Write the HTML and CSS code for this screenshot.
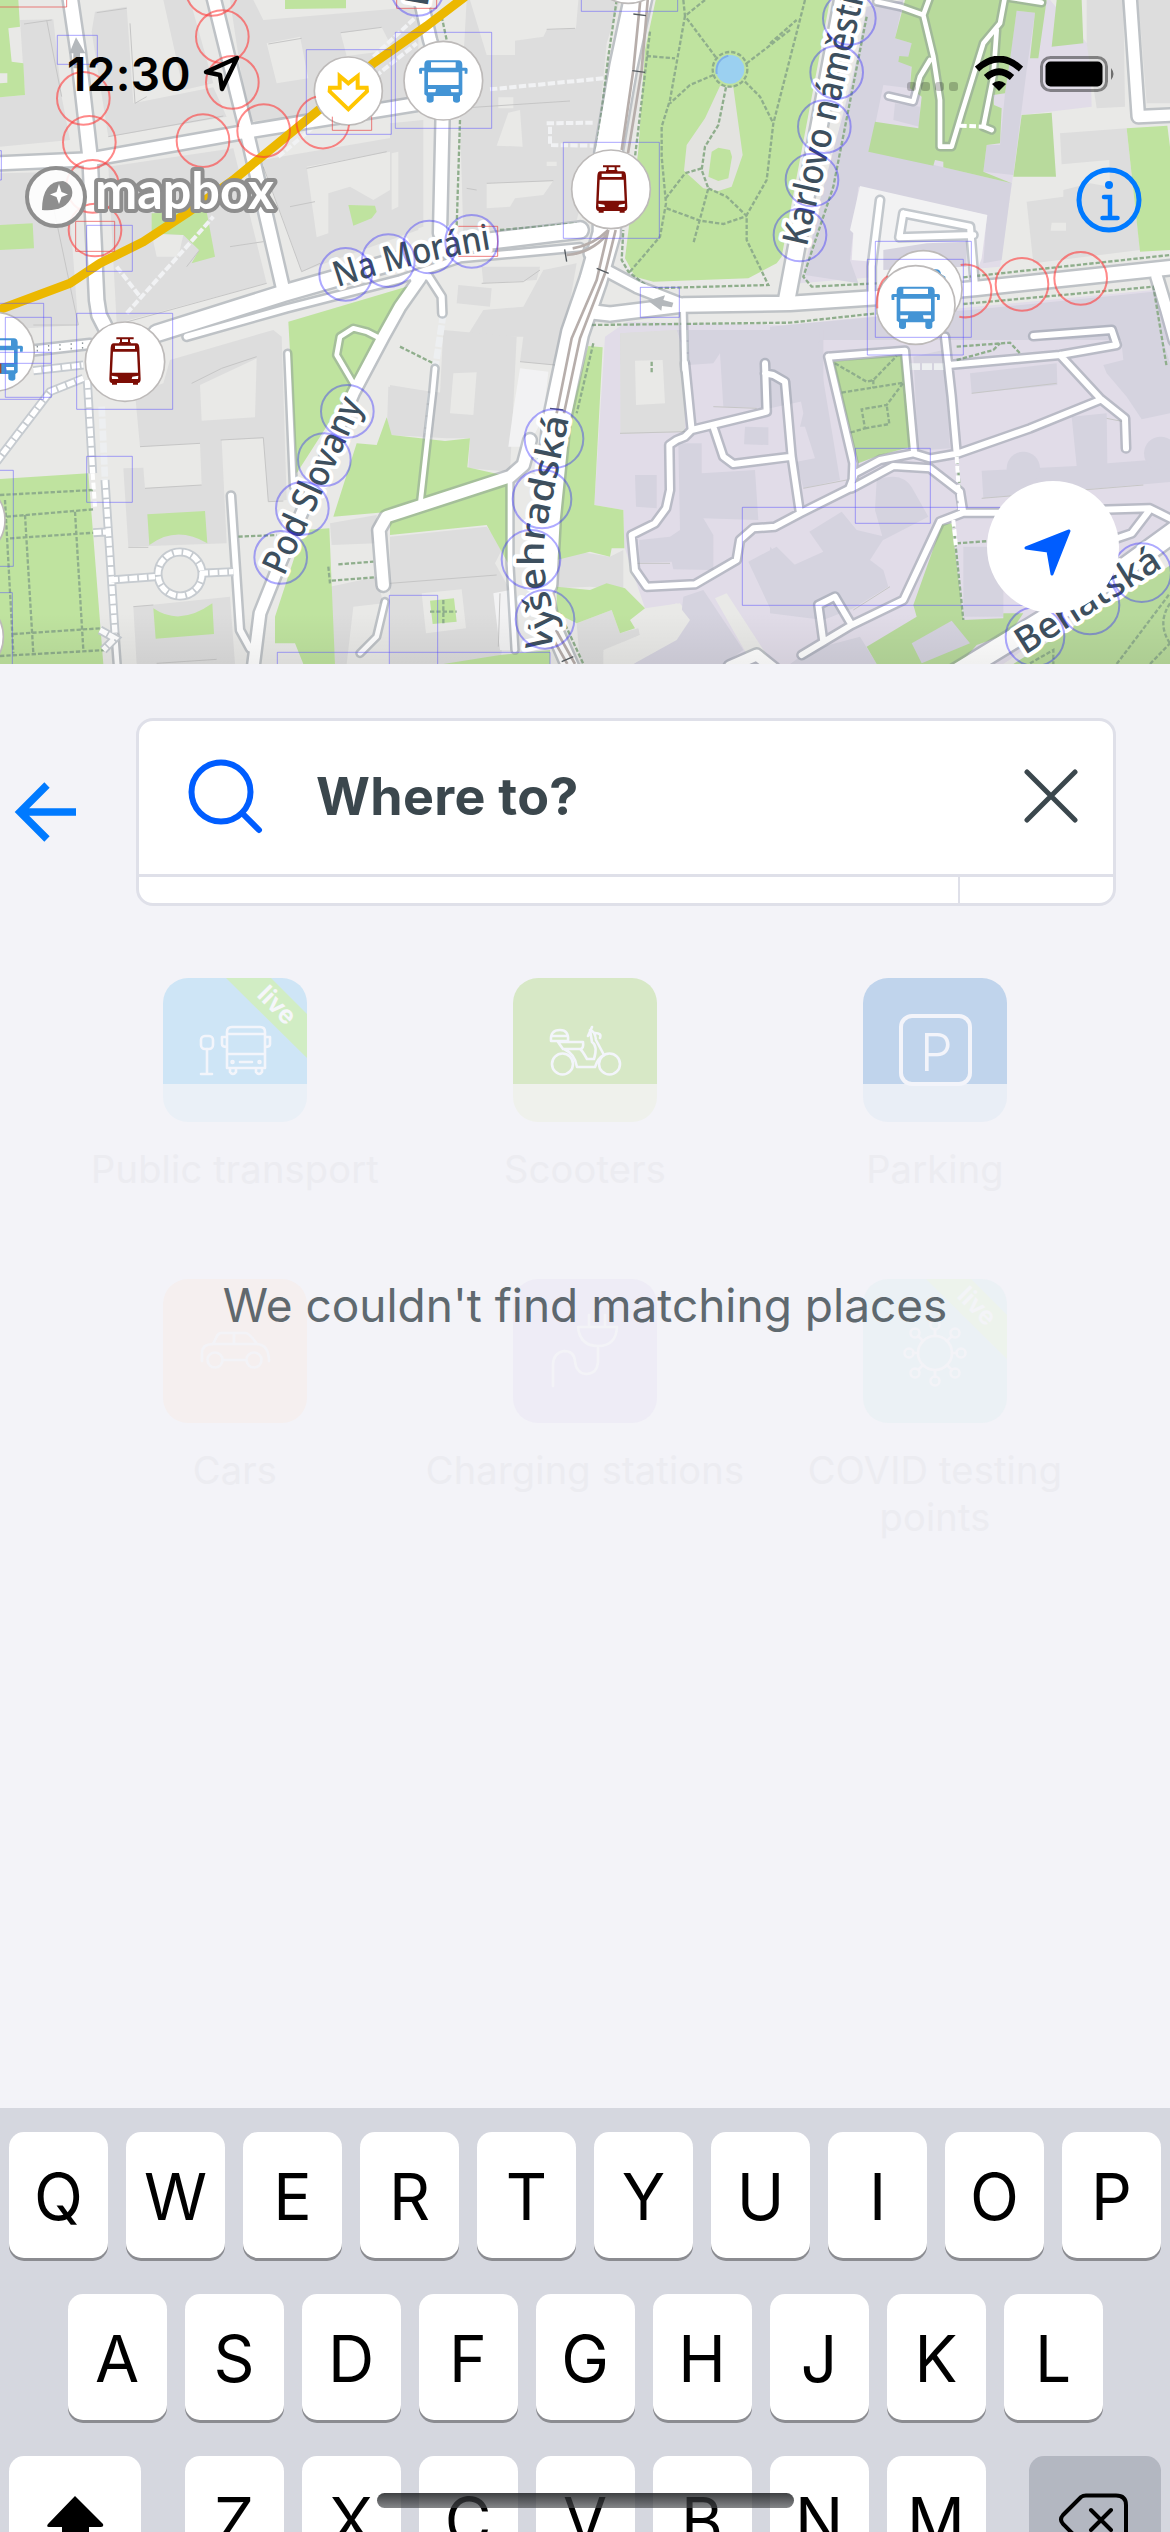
FILE: index.html
```html
<!DOCTYPE html>
<html lang="en">
<head>
<meta charset="utf-8">
<title>Where to?</title>
<link rel="stylesheet" href="styles.css">
</head>
<body>
<main class="screen">
<section class="map">
<svg class="map-canvas" viewBox="0 0 3510 1992" width="1170" height="664">
<defs>
<g id="roads">
  <g>
    <path class="r42" d="M210 -10L235 160L270 470L290 900L297 945L325 1000"/>
    <path class="r36" d="M-10 490L270 478L740 395L1250 312"/>
    <path class="r36" d="M640 -10L740 395L850 870"/>
    <path class="r50" d="M470 1000L850 880L1200 780L1370 735L1740 690"/>
    <path class="r20" d="M560 1010L860 925L1200 838L1380 775L1740 742"/>
  </g>
  <g transform="translate(1170 0)">
    <path class="r36" d="M90 -10L120 120L160 250L150 700"/>
    <path class="r50" d="M1360 -10L1190 900"/>
    <path class="r40" d="M600 935L660 942L880 915L1200 910L1460 893L1760 865L2040 835L2350 802"/>
    <path class="r30" d="M880 915L740 860L650 812L600 760"/>
    <path class="r16" d="M880 930L884 1110"/>
    <path class="r20" d="M70 835L115 828L155 890L157 940"/>
    <path class="r30" d="M90 835L30 920L-20 1010L-110 1180L-330 1690L-390 1840L-410 2000"/>
    <path class="r84" d="M745 -10L700 200L655 460L650 700L610 840L555 1000L500 1260L470 1560L460 1750"/>
    <path class="r50" d="M450 1720L480 1860L545 2010"/>
  </g>
  <g transform="translate(2310 0)">
    <path class="r34" d="M1080 -10L1105 350L1210 345"/>
    <path class="r30" d="M1160 830L1190 930L1215 1020"/>
    <path class="r16" d="M320 5L390 20L460 45L490 170L510 300L510 440L545 440L575 340L640 130L690 70L705 -10M480 -10L460 45M480 180L450 230L430 305L355 288M680 90L670 230L640 380L665 390M700 -10L815 8"/>
    <path class="r20" d="M330 600L305 800L305 880M400 640L388 712L610 705M400 640L600 680L615 860"/>
  </g>
  <g transform="translate(0 990)">
    <path class="r16" d="M345 915L352 1010M863 70L880 470M1155 815L1130 920L1080 970"/>
    <path class="r20" d="M693 497L720 900L750 955"/>
    <path class="r16" d="M1060 160L1010 75L1020 20L1060 -5L1100 5L1140 25"/>
    <path class="r34" d="M1150 765L1137 600L1160 560L1200 547L1530 440L1570 405L1590 330"/>
    <path class="r22" d="M90 62L270 42"/>
  </g>
  <g transform="translate(1170 990)">
    <path class="r16" d="M135 115L128 190L112 330L92 510M360 450L360 700L375 960"/>
    <path class="r20" d="M885 100L905 300M1125 100L1130 245L905 300L885 320L860 330L838 345L840 480L828 535L795 580L725 615L735 720L770 770L915 763L1040 690L1050 630L1090 595L1155 590L1230 550L1380 475M970 290L1000 380L1030 402L1205 380M1125 130L1150 135L1185 155L1205 380L1230 550"/>
    <path class="r30" d="M1020 1010L1100 975L1150 1015"/>
  </g>
  <g transform="translate(2310 990)">
    <path class="r20" d="M790 18L1025 0L1040 45L870 75L535 105M870 75L990 205L1065 265L1068 355M525 20L545 200L560 370M990 210L780 295L565 370L480 385L430 370L330 390L255 430L238 475M245 475L370 408L480 415L570 485L580 548M580 548L690 548L1140 535L1210 570M1135 545L1085 610L1035 627M580 548L510 575L400 810L245 885L95 975M245 885L195 800L145 825L160 935M175 80L405 62L432 365M175 80L250 400L248 450"/>
    <path class="r60" d="M560 1030L740 920L1000 760L1220 600"/>
  </g>
</g>
<g id="stairs">
  <path d="M-10 1385L150 1175L250 1135M262 1140L278 1420M315 1440L345 1900M100 1112L250 1095M330 1740L465 1730M600 1720L700 1715M280 1598L330 1595M300 1890L345 1915L310 1950"/>
  <circle cx="540" cy="1722" r="66"/>
</g>
<g id="bus">
  <path fill="#4394d5" fill-rule="evenodd" d="M-46 -60Q-56 -60 -57 -48L-57 -38L-68 -38Q-73 -38 -73 -32L-72 -20L-64 -20L-64 -29L-57 -29L-57 42L-50 47L-50 62Q-48 67 -41 67Q-29 67 -29 60L-29 47L29 47L29 60Q29 67 41 67Q48 67 50 62L50 47L57 42L57 -29L64 -29L64 -20L72 -20L73 -32Q73 -38 68 -38L57 -38L57 -48Q56 -60 46 -60ZM-37 -54L37 -54L37 -38L-37 -38ZM-46 -24L46 -24L46 14L-46 14ZM-46 26L-22 26L-24 36L-46 36ZM46 26L22 26L24 36L46 36Z"/>
</g>
<g id="tram">
  <path fill="none" stroke="#7d0d05" stroke-width="6" d="M-26 -68H26M-12 -67V-54M12 -67V-54M-17 -54H17"/>
  <path fill="#7d0d05" fill-rule="evenodd" d="M-34 -53H34Q42 -53 43 -40L47 55Q47 66 39 66V71H24V66H-24V71H-39V66Q-47 66 -47 55L-43 -40Q-42 -53 -34 -53ZM-30 -46V-36H30V-46ZM-36 -28L-39 35H39L36 -28ZM-40 44L-39 54H-20L-22 47ZM40 44L39 54H20L22 47Z"/>
</g>
<path id="ln-morani" d="M1013 862Q1235 787 1478 747"/>
<path id="ln-slovany" d="M852 1730L1092 1206"/>
<path id="ln-vysehrad" d="M1650 1955Q1672 1860 1648 1790Q1622 1690 1636 1600L1710 1238"/>
<path id="ln-karlovo" d="M2420 742L2602 -56"/>
<path id="ln-benat" d="M3074 1966L3504 1692"/>
<linearGradient id="fade" x1="0" y1="0" x2="0" y2="1"><stop offset="0" stop-color="#000" stop-opacity="0"/><stop offset="1" stop-color="#000" stop-opacity=".06"/></linearGradient>
</defs>

<rect width="3510" height="1992" fill="#e9e9e7"/>

<g class="campus">
  <path d="M2600 60L2700 20L3150 0L3270 140L3275 320L3065 345L3000 800L2400 850Z"/>
  <path d="M1815 1010L1880 965L2350 975L3460 870L3510 1000V1640L3010 1992H2170L2040 1810L1935 1825L1873 1640L1870 1530L1783 1515Z"/>
</g>

<g class="block">
  <path d="M60 60L160 58L185 290L210 420L0 440V292L75 285ZM275 95L285 35L380 20L400 310L640 262L680 350L325 410ZM490 0H570L640 250L550 270ZM690 0H760L790 60L1255 20V310L745 365ZM0 520L200 515L235 975L0 990ZM325 500L700 445L800 850L350 970ZM785 480L1255 400V690L905 815Z"/>
  <path transform="translate(1170 0)" d="M230 0H690L650 130L620 450L560 660L220 700L210 360ZM0 370L100 360V680L0 710ZM205 855L305 865L300 920L200 910ZM275 800L450 800L440 840L280 850ZM460 810L560 790L520 1020L490 1095L390 1085L400 1010H230L280 930L400 920Z"/>
  <path transform="translate(2310 0)" d="M950 0H1060L1065 320L980 325L950 130ZM1105 0H1200V310L1130 310ZM870 400L1070 385L1110 750L790 790L770 605L880 590V570L960 550L1020 560L1018 480L875 493Z"/>
  <path transform="translate(0 990)" d="M510 90L820 0L845 20L860 510L805 515L790 325L665 330L680 640L385 650L370 415L430 413L435 475L605 465L600 340L420 350L405 190L490 160ZM400 830L690 800L705 1002H410ZM990 580L1130 555V640L995 645ZM990 770L1130 740L1150 820L1060 830L1040 1002H1005ZM1165 170L1250 180L1340 190V320L1160 315Z"/>
  <path transform="translate(1170 990)" d="M160 0L380 20L360 425L235 415L240 325L170 325L0 315V165L150 190ZM690 10L860 0L885 100V305L692 312ZM0 620L290 590L340 650L315 700L360 780L330 1002H0ZM500 690L570 665L660 680L700 660V780L600 770L500 775ZM560 880L665 840L690 910L745 895L750 915L640 960L650 1002H570Z"/>
</g>
<g class="hall">
  <path transform="translate(2310 0)" d="M290 20L400 0L375 115L425 130L420 265L340 255L300 450L725 550L695 780L640 790L650 645L265 560L240 780L265 850L105 825L150 600L250 230ZM740 32L795 38L770 210L730 525L640 515L650 435L690 435L705 280ZM375 310L450 320L448 380L370 360ZM340 750L600 725V800L340 810ZM0 980L320 950L600 930L1150 875L1190 1020H0Z"/>
  <path transform="translate(1170 990)" d="M690 0H1300V200L1140 235L1000 230L990 70L970 100L895 105L860 0ZM865 340H935V430L1095 420L1105 570L940 565L970 615V720L850 718L845 695L748 698V630L840 620L870 600ZM735 435H800V535L738 530ZM1065 290L1135 292V345L1062 343ZM1075 695L1160 650L1230 720L1240 800L1145 845ZM880 800L940 780L1060 960L1000 1002H730L870 890Z"/>
  <path transform="translate(2310 990)" d="M0 0H150L145 60L210 450L100 475L80 395L135 385L105 290H90L100 250L65 75H0ZM430 80L520 60L540 355L445 362ZM600 130L860 100L862 165L605 190ZM905 260L1010 250L1012 400L1210 385V455L640 505L635 422L920 408ZM1000 105L1060 90L1050 0H1170L1200 100V250L1115 268L1070 200L1010 130ZM320 450Q400 420 430 480L475 560L340 630L315 540ZM118 605L215 545L260 600L345 620L300 690L340 720L355 770L250 835L160 870L0 850V650L60 710L160 665ZM580 650H700V860H580ZM120 960L270 920L320 1002H60Z"/>
  <circle cx="3070" cy="1405" r="50"/><circle cx="3482" cy="1360" r="50"/>
</g>
<path class="block" d="M1862 1000L2030 990L2055 1090V1295L1862 1302Z"/>
<g class="yard">
  <path d="M800 130L900 110L925 235L830 250ZM1022 100L1145 82L1180 150L1040 168ZM455 702L550 705L535 770H470ZM920 500L1170 455V570L1120 600L1050 560L985 580V700L950 712Z"/>
  <path transform="translate(1170 0)" d="M240 0H565L558 85L470 90L460 110L375 122V165L290 165ZM325 292H370V325H325ZM355 338L390 330L398 440L320 437ZM290 550L490 542L460 585L375 595L360 620L290 625ZM5 460L25 455V620L5 630ZM470 485H500V498H470Z"/>
  <path transform="translate(0 990)" d="M600 165L770 85L765 262L605 272Z"/>
  <path transform="translate(1170 990)" d="M190 130L260 127L250 255L180 250ZM735 92L818 90L825 220L738 225ZM95 790L215 778L228 895L108 910ZM975 805L1010 790L1140 990H1080ZM740 860L860 820L900 870L860 930L730 1002H640L640 965L750 915Z"/>
  <path d="M3155 668H3198V692H3152Z"/>
</g>
<g class="lot">
  <path d="M2580 558L2962 645L2945 775L2910 870H2610L2620 785L2555 780L2560 700L2550 690Z"/>
  <path d="M1560 1105L1645 1115L1630 1250L1600 1310L1565 1340H1525L1540 1230ZM1480 1780L1530 1770V1950H1500Z"/>
</g>
<path class="hall" d="M2650 750L2780 730L2900 725V800L2650 810Z"/>

<g class="park">
  <path d="M0 0H55L60 80L25 85L35 185L70 190L75 285L0 292V250L22 248V220H0ZM0 675L98 670L102 745L0 750ZM455 640L620 635L645 770L575 790L597 750L550 705L455 700ZM855 0H1038V25L855 27ZM1045 615L1125 617L1130 635L1115 655L1060 677ZM865 965L1270 845L1050 1170L890 1420Z"/>
  <path d="M1967 0H2490L2345 770L2330 790L2245 835L1960 845L1905 830L1875 775L1915 450L1935 150Z"/>
  <path transform="translate(2310 0)" d="M1070 385L1192 377L1200 440V750L1110 755Z"/>
  <path d="M0 1437L265 1420L310 1992H0ZM442 1543L615 1533L622 1630Q530 1575 448 1635ZM460 1825Q540 1880 637 1810L642 1902L467 1916ZM1160 1252L1175 1305L1335 1323L1410 1315L1402 1402L1530 1430V1700L1460 1575L1170 1605V1535L1000 1550L1070 1330L1130 1335ZM910 1590L988 1585L1005 1992H910L885 1930H825V1850Z"/>
  <path transform="translate(1170 990)" d="M595 48L638 52L613 525L700 540L703 655L665 655L660 680L600 665L500 690L480 640L540 260ZM500 770L600 780L650 760L705 775L765 835L720 870L735 895L690 910L665 840L560 880L500 850ZM120 812L192 805L200 875L128 882ZM160 1002L330 975L480 960V1002Z"/>
</g>
<g class="lawn">
  <path transform="translate(2310 0)" d="M405 0H830L805 175L780 175L795 38L740 32L720 180L705 280L670 285L672 315L695 325L690 430L650 435L640 515L725 550L520 502L520 485L495 480L490 497L295 455L315 365L445 385L455 290L420 265L425 200L385 185L388 168L415 170L425 130L375 115ZM860 0H935L940 130L845 140ZM755 345L845 338L858 530H730Z"/>
  <path transform="translate(2310 990)" d="M190 95L395 75L425 350L330 375L265 400ZM515 585L545 580L580 870L700 865V850L760 850L720 910L620 945L570 1002H320L290 950L440 860L430 825ZM730 1002L1210 700V1002Z"/>
</g>
<path class="hall" d="M2735 1930L2855 1862L2910 1930L2765 1990Z"/>
<path fill="#e3e3e0" d="M2160 258L2200 262L2228 465L2195 560L2155 573L2110 565L2052 512L2060 435L2115 355Z"/>
<path class="park" d="M2135 455L2155 443L2190 450L2196 470L2185 535L2155 543L2125 530Z"/>

<g class="edge">
  <path d="M72 72L155 60M290 38L380 25M390 70L405 310L440 290M325 410L670 348M805 132L905 115M1022 98L1145 82M365 970L800 850M790 500L905 815L960 790M920 505L1160 455M690 740L790 725M870 620L945 605M560 800L597 752M160 620L235 975L100 975M140 60L185 290"/>
  <path transform="translate(1170 0)" d="M470 88L555 85M290 550L490 542M205 325L540 303M230 565L260 570M275 850L400 845L450 810"/>
  <path d="M575 1150L665 1105L770 1070M420 1340L600 1330M435 1465L605 1455M662 1320L790 1313L805 1505L850 1503M385 1642L445 1642M400 1820L460 1815M470 1990L650 1978M1560 1085L1665 1095M1860 1300L2055 1295M1170 1750L1490 1725M1500 1780L1495 1940"/>
  <path d="M2945 1495L3430 1455M2915 1180L3170 1150M3320 1255L3370 1265M2560 1830L2670 1760M2140 1220L2270 1225M1910 1690H2010M2410 1465L2540 1440"/>
</g>

<g class="track-path">
  <path transform="translate(1170 0)" d="M880 0L885 48L980 175M945 0L885 48L840 300L815 380V470L828 610L810 710L720 815M1200 90L1070 190M970 225L900 255L840 310M1065 245L1110 290L1150 370M1245 0L1150 370L1130 540L1070 645V720L1135 855L780 865L715 815L695 780L700 690M1008 262L985 375L945 440L935 510L955 565L910 730M935 505L885 520L825 598M955 565L1010 590L1070 648M830 625L930 662L1000 672L1070 648M780 95L735 470M770 168L855 175M605 975L1200 968L1460 940M680 0L655 170L620 450M330 690L560 670M210 360L200 680M155 50L170 120M1140 130L1220 60M1430 50L1330 560L1240 830L1265 860L1460 850M1720 832L2340 765M1720 912L2290 860L2330 1100"/>
  <circle cx="2190" cy="208" r="52"/>
  <path d="M0 1485L280 1470M20 1550L280 1528M30 1615L330 1595M75 1545L100 1960M225 1535L250 1950M15 1500L40 1960M40 1902L300 1885M0 1968L320 1950M715 1610L830 1605M1015 1693L1120 1685M995 1742L1125 1732M985 1700L990 1750M1200 1040L1300 1090M1955 1085V1120"/>
  <path transform="translate(2310 990)" d="M195 100L290 155L310 150L380 78M215 188L400 158L350 225L275 238L285 295L240 308M285 295L358 282L350 225M310 150V175M560 50L720 38L750 70M560 90L670 60L690 40M550 580L580 870M560 640L700 630M570 1002L720 920M1040 1002L1200 790M1140 1002L1200 940M780 1000L850 960V1002M1200 820Q1160 880 1200 940M560 370L570 480"/>
  <path d="M1780 1030L1730 1240M1680 1840L1750 1992M1290 1835H1370M1330 1800V1870"/>
</g>
<g class="faded-path">
  <path d="M1470 268L1810 235M1640 370L1780 368M1650 380V435L1780 437M835 470L1000 330L1250 130M380 940L560 740L640 650M350 800L420 890M1120 170L1260 40"/>
</g>
<path class="passage" d="M1330 940L1305 1110M2055 990L2056 1085M305 1220L315 1440M2730 1100L2850 1100M1293 1180L1282 1300"/>

<use href="#roads" class="road-case"/>
<use href="#roads" class="road-fill"/>
<use href="#stairs" class="stairs-case"/>
<use href="#stairs" class="stairs-fill"/>
<path fill="none" stroke="#8d9499" stroke-width="5" stroke-dasharray="4 30" d="M110 1040L270 1028M110 1052L270 1042"/>
<path fill="none" stroke="#fff" stroke-width="12" stroke-dasharray="20 8" d="M2870 1370L2880 1530M2860 1560L2868 1640M2880 377L2950 380M278 1420L285 1520"/>

<g class="rail">
  <path transform="translate(1170 0)" d="M752 -10L730 210L695 450M774 -10L755 210L714 460M655 690L620 840L545 1015L500 1240M677 690L645 820L570 1015L522 1240M655 690Q610 735 548 745M650 705Q600 760 530 765"/>
  <path d="M1650 1900L1702 1992M1668 1890L1725 1992"/>
</g>
<path fill="none" stroke="#555b60" stroke-width="4" d="M1900 42L1938 47M1897 212L1935 217M1790 805L1826 820M1694 748L1700 785M1650 1225L1690 1230M1685 1985L1720 1970"/>
<circle cx="2190" cy="208" r="43" fill="#9bd0f0"/>
<path fill="none" stroke="#7fb0e6" stroke-width="6" d="M2150 222Q2145 180 2185 167"/>
<g fill="#b4b8bc">
  <path d="M228 112L208 160H220V205H240V160H256Z"/>
  <path d="M1944 902L1995 886L1990 900L2020 908L2016 922L1986 918L1984 932Z"/>
</g>
<path fill="none" stroke="#ecb800" stroke-width="27" stroke-linejoin="round" d="M-10 932L210 850L300 790L430 725L560 640L700 540L950 335L1120 190L1280 78L1395 -10"/>

<rect y="1840" width="3510" height="152" fill="url(#fade)"/>

<g class="street-name">
  <text font-size="106"><textPath href="#ln-morani" textLength="476" lengthAdjust="spacingAndGlyphs">Na Moráni</textPath></text>
  <text font-size="108"><textPath href="#ln-slovany" textLength="570" lengthAdjust="spacingAndGlyphs">Pod Slovany</textPath></text>
  <text font-size="108"><textPath href="#ln-vysehrad" textLength="712" lengthAdjust="spacingAndGlyphs">Vyšehradská</textPath></text>
  <text font-size="108"><textPath href="#ln-karlovo" textLength="765" lengthAdjust="spacingAndGlyphs">Karlovo náměstí</textPath></text>
  <text font-size="110"><textPath href="#ln-benat" textLength="494" lengthAdjust="spacingAndGlyphs">Benátská</textPath></text>
  <text font-size="98" transform="translate(1282 22) rotate(-80)">B</text>
</g>

<g class="marker">
  <circle cx="1045" cy="273" r="102"/><circle cx="1330" cy="242" r="118"/><circle cx="1833" cy="568" r="118"/><circle cx="375" cy="1085" r="119"/>
  <circle cx="-15" cy="1055" r="118"/><circle cx="2770" cy="868" r="116"/><circle cx="1885" cy="-106" r="116"/><circle cx="-100" cy="1560" r="115"/><circle cx="-105" cy="1910" r="115"/>
</g>
<path fill="#4394d5" d="M2785 808H2808Q2822 808 2823 822L2836 830L2837 852L2828 850Q2815 812 2785 812Z"/>
<circle class="marker" cx="2747" cy="915" r="118"/>
<use href="#bus" x="1330" y="241"/><use href="#bus" x="2747" y="920"/><use href="#bus" x="-4" y="1075"/>
<path d="M0 1090V1120" stroke="#a3492c" stroke-width="8"/>
<use href="#tram" x="1835" y="567"/><use href="#tram" x="375" y="1083"/>
<path fill="none" stroke="#ffc600" stroke-width="12" d="M1019 228L1045 250L1073 228V263H1100L1101 274L1045 328L989 274L990 263H1019Z"/>

<g class="hit-red">
  <circle cx="250" cy="295" r="79"/><circle cx="268" cy="427" r="79"/><circle cx="278" cy="559" r="79"/><circle cx="285" cy="690" r="79"/><circle cx="636" cy="-32" r="79"/><circle cx="667" cy="110" r="79"/><circle cx="697" cy="247" r="79"/><circle cx="609" cy="422" r="79"/><circle cx="791" cy="392" r="79"/>
  <path d="M948 290A79 79 0 1 0 1047 375M2632 925Q2628 850 2663 828M2882 795A79 79 0 1 1 2878 950"/>
  <circle cx="3066" cy="853" r="79"/><circle cx="3242" cy="835" r="79"/>
</g>
<g class="box-red">
  <path d="M0 21H200V0M227 664H344V754H227ZM997 350V391H1115V350M1190 0V25H1310V0M1375 679H1493V769H1375"/>
</g>
<g class="hit-blue">
  <circle cx="1037" cy="823" r="79"/><circle cx="1165" cy="782" r="79"/><circle cx="1288" cy="741" r="79"/><circle cx="1415" cy="724" r="79"/><circle cx="1252" cy="-32" r="79"/>
  <circle cx="842" cy="1672" r="79"/><circle cx="907" cy="1525" r="79"/><circle cx="973" cy="1379" r="79"/><circle cx="1042" cy="1234" r="79"/>
  <circle cx="2400" cy="705" r="79"/><circle cx="2436" cy="540" r="79"/><circle cx="2473" cy="380" r="79"/><circle cx="2510" cy="217" r="79"/><circle cx="2548" cy="55" r="79"/>
  <circle cx="1635" cy="1858" r="88"/><circle cx="1593" cy="1678" r="88"/><circle cx="1626" cy="1497" r="88"/><circle cx="1662" cy="1316" r="88"/>
  <circle cx="3105" cy="1910" r="88"/><circle cx="3270" cy="1815" r="88"/><circle cx="3425" cy="1718" r="88"/>
</g>
<g class="box-blue">
  <path d="M172 106H292V193H172ZM919 149H1174V403H919ZM1186 97H1475V385H1186ZM1744 0V34H2033V0M1690 427H1978V715H1690ZM1921 862H2038V952H1921ZM260 676H397V814H260ZM0 452H4V540H0M0 910H131V1198H0M16 952H154V1192H16ZM0 1057H154V1090H0M230 940H518V1228H230ZM260 1369H397V1507H260ZM0 1411H40V1699H0M0 1778H37V1992M832 1992V1957H1650V1992M1168 1992V1786H1313V1992M2626 724H2914V1012H2626ZM2602 778H2890V1065H2602ZM2227 1522H3000M2227 1522V1816H3080M2566 1345H2791V1570H2566Z"/>
</g>
</svg>

<svg class="mapbox" viewBox="0 0 270 70" width="270" height="70">
  <circle cx="36" cy="35" r="29" fill="#fff" fill-opacity=".9" stroke="#8e8e8e" stroke-width="4"/>
  <path fill="#8e8e8e" d="M22 48Q22 19 43 19Q54 23 52 34Q46 50 22 48Z"/>
  <path fill="#fff" d="M39 22L41.5 30L48 32.500L41.500 35L39 42L36.500 35L30 32.500L36.500 30Z"/>
  <text x="75" y="46.500" textLength="179" lengthAdjust="spacingAndGlyphs">mapbox</text>
</svg>
<svg class="info" viewBox="0 0 66 66" width="66" height="66"><circle cx="33" cy="33" r="30" fill="none" stroke="#007aff" stroke-width="5"/><circle cx="33" cy="18" r="4" fill="#007aff"/><path d="M28 30H34V50M26.500 51H41.500" fill="none" stroke="#007aff" stroke-width="4.500" stroke-linecap="round"/></svg>
<div class="locate"><svg viewBox="0 0 132 132" width="132" height="132"><path d="M39 67L82 50L65 93L61 70Z" fill="#005dff" stroke="#005dff" stroke-width="3" stroke-linejoin="round"/></svg></div>
<div class="statusbar">
  <span class="clock">12:30</span>
  <svg class="loc" viewBox="0 0 38 38" width="38" height="38"><path d="M3 17L34 3L19 34L17 20Z" fill="none" stroke="#000" stroke-width="4.500" stroke-linejoin="round"/></svg>
  <span class="dots"><i></i><i></i><i></i><i></i></span>
  <svg class="wifi" viewBox="0 0 48 36" width="48" height="36"><path d="M2 13Q24 -7 46 13M11 21.500Q24 10 37 21.500" fill="none" stroke="#000" stroke-width="6.500"/><path d="M17 28Q24 22 31 28L24 35Z"/></svg>
  <svg class="battery" viewBox="0 0 76 36" width="76" height="36"><rect x="1.500" y="1.500" width="65" height="33" rx="9" fill="none" stroke="#000" stroke-opacity=".42" stroke-width="3"/><rect x="5.500" y="5.500" width="57" height="25" rx="5"/><path d="M71 12Q76 18 71 24Z" fill-opacity=".5"/></svg>
</div>
</section>

<section class="sheet">
  <div class="search-row">
    <svg class="back" viewBox="0 0 64 64" width="64" height="64"><path d="M64 32H8M35 5L8 32L35 59" fill="none" stroke="#007aff" stroke-width="7.500"/></svg>
    <div class="search-card">
      <div class="search-field">
        <svg class="glass" viewBox="0 0 76 76" width="76" height="76"><circle cx="34" cy="34" r="29.500" fill="none" stroke="#005dff" stroke-width="6"/><path d="M55 55L72 72" stroke="#005dff" stroke-width="6" stroke-linecap="round"/></svg>
        <span class="query">Where to?</span>
        <svg class="clear" viewBox="0 0 54 54" width="54" height="54"><path d="M3 3L51 51M51 3L3 51" stroke="#3b474d" stroke-width="5" stroke-linecap="round"/></svg>
      </div>
      <div class="search-tail"><span></span><span></span></div>
    </div>
  </div>

  <div class="services">
    <div class="service">
      <svg class="tile transit" viewBox="0 0 144 144" width="144" height="144">
        <path fill="#d1edc4" d="M63 0H108L144 36V80Z"/>
        <text class="live" transform="translate(93 18) rotate(45)" fill="#f5f6fa">live</text>
        <g class="line"><rect x="38" y="58" width="12" height="13" rx="4"/><path d="M44 71V95M38 96H49"/><path d="M64 90V54Q64 49 69 49H97Q102 49 102 54V90ZM64 56H102M64 76H102M64 59H59V66Q59 69 64 69M102 59H107V66Q107 69 102 69M67 91V94Q70 98 73 94V91M93 91V94Q96 98 99 94V91M77 84H89"/><circle cx="69.500" cy="84" r="1"/><circle cx="96.500" cy="84" r="1"/></g>
      </svg>
      <span class="name">Public transport</span>
    </div>
    <div class="service">
      <svg class="tile scooter" viewBox="0 0 144 144" width="144" height="144"><g class="line"><circle cx="49.500" cy="86" r="10.500"/><circle cx="96.500" cy="86" r="10.500"/><path d="M39 63H55Q56 52 47 52Q37 52 38 63ZM39 58H54M45 64L50 71H67Q71 71 70 64H45M51 71Q62 76 64 89H82Q85 80 91 77L83 62Q82 53 77 52L79 64Q85 68 81 81H74Q69 72 67 71M75 58L79 49M82 55Q89 55 87 60"/></g></svg>
      <span class="name">Scooters</span>
    </div>
    <div class="service">
      <svg class="tile parking" viewBox="0 0 144 144" width="144" height="144"><rect x="38" y="38" width="69" height="68" rx="11" fill="none" stroke="#f3f4fa" stroke-width="4"/><text x="57" y="93" font-size="52" fill="#f3f4fa" class="pee">P</text></svg>
      <span class="name">Parking</span>
    </div>
    <div class="service">
      <svg class="tile cars" viewBox="0 0 144 144" width="144" height="144"><g class="line dim"><path d="M39 82V74Q39 65 50 65H94Q106 66 106 82M50 65L54 57Q55 54 59 54H83Q86 54 94 65M71 54V65M61 81H82"/><circle cx="52" cy="81" r="7.500"/><circle cx="91" cy="81" r="7.500"/></g></svg>
      <span class="name">Cars</span>
    </div>
    <div class="service">
      <svg class="tile charging" viewBox="0 0 144 144" width="144" height="144"><g class="line dim"><path d="M65 48H104Q103 67 85 67Q67 67 65 48M76 47V36M92 47V36M85 67V83Q84 95 73 95Q63 94 62 82Q61 72 51 72Q40 74 40 86V107"/></g></svg>
      <span class="name">Charging stations</span>
    </div>
    <div class="service">
      <svg class="tile covid" viewBox="0 0 144 144" width="144" height="144"><path fill="#edf3ec" d="M63 0H108L144 36V80Z"/><text class="live" transform="translate(93 18) rotate(45)" fill="#f3f4f7">live</text><g class="line dim"><circle cx="72" cy="74" r="17"/><path d="M72 91V98M89 74H94M55 74H50M84 86L89 91M60 86L55 91M84 62L89 57M60 62L55 57M72 57V50"/><circle cx="72" cy="102" r="4.500"/><circle cx="98" cy="74" r="4.500"/><circle cx="46" cy="74" r="4.500"/><circle cx="92" cy="94" r="4.500"/><circle cx="52" cy="94" r="4.500"/><circle cx="92" cy="54" r="4.500"/><circle cx="52" cy="54" r="4.500"/><circle cx="72" cy="46" r="4.500"/></g></svg>
      <span class="name">COVID testing points</span>
    </div>
    <p class="empty"><span>We couldn't find matching places</span></p>
  </div>
</section>

<section class="keyboard">
  <div class="keys"><b>Q</b><b>W</b><b>E</b><b>R</b><b>T</b><b>Y</b><b>U</b><b>I</b><b>O</b><b>P</b></div>
  <div class="keys"><b>A</b><b>S</b><b>D</b><b>F</b><b>G</b><b>H</b><b>J</b><b>K</b><b>L</b></div>
  <div class="keys last">
    <b class="wide"><svg viewBox="0 0 132 126" width="132" height="126"><path d="M66 40L94 68Q95 71 92 71H80V92H53V71H40Q37 71 39 68Z"/></svg></b>
    <span class="letters"><b>Z</b><b>X</b><b>C</b><b>V</b><b>B</b><b>N</b><b>M</b></span>
    <b class="wide erase"><svg viewBox="0 0 132 126" width="132" height="126"><path d="M34 59L52 41Q54 39.500 57 39.500H87Q97 39.500 97 49V78Q97 88 87 88H57Q54 88 52 86L34 68Q30 63.500 34 59ZM62 54L82 74M82 54L62 74" fill="none" stroke="#000" stroke-width="4" stroke-linecap="round"/></svg></b>
  </div>
  <div class="home"></div>
</section>
</main>
</body>
</html>
```
FILE: styles.css
```css
* { box-sizing: border-box; }
body { margin: 0; font-family: Inter, "Liberation Sans", sans-serif; }
.screen { width: 1170px; height: 2532px; display: flex; flex-direction: column; overflow: hidden; background: #f3f3f8; }

/* map */
.map { position: relative; height: 664px; flex: none; overflow: hidden; }
.map-canvas { display: block; }
.campus { fill: #e1dce8; }
.block { fill: #dddddd; }
.hall { fill: #d5d3df; }
.yard { fill: #e9e9e7; }
.lot { fill: #f2f2f3; }
.park { fill: #bfe39f; }
.lawn { fill: #b8da9c; }
.edge { fill: none; stroke: #c6c6c6; stroke-width: 3; }
.track-path { fill: none; stroke: #8fae8c; stroke-width: 7; stroke-dasharray: 13 6; }
.faded-path { fill: none; stroke: #f1f2f4; stroke-width: 12; stroke-dasharray: 22 7; }
.passage { fill: none; stroke: #edeff1; stroke-width: 20; stroke-dasharray: 30 6; }
.road-case { --extra: 15px; stroke: #7f8a95; fill: none; opacity: .4; }
.road-fill { --extra: 0px; stroke: #fff; fill: none; }
#roads path { stroke-linejoin: round; stroke-linecap: round; }
.r16 { stroke-width: calc(14px + var(--extra)); }
.r20 { stroke-width: calc(18px + var(--extra)); }
.r22 { stroke-width: calc(24px + var(--extra)); }
.r30 { stroke-width: calc(32px + var(--extra)); }
.r34 { stroke-width: calc(34px + var(--extra)); }
.r36 { stroke-width: calc(36px + var(--extra)); }
.r40 { stroke-width: calc(40px + var(--extra)); }
.r42 { stroke-width: calc(40px + var(--extra)); }
.r50 { stroke-width: calc(46px + var(--extra)); }
.r60 { stroke-width: calc(56px + var(--extra)); }
.r84 { stroke-width: calc(78px + var(--extra)); }
.stairs-case { fill: none; stroke: #c6cbd0; stroke-width: 27; }
.stairs-fill { fill: none; stroke: #fff; stroke-width: 16; stroke-dasharray: 24 5; }
.rail { fill: none; stroke: #b7aeab; stroke-width: 8; }
.street-name { font-family: "Noto Sans", "Open Sans", sans-serif; font-weight: 500; fill: #3d4f5e; stroke: #fff; stroke-width: 24px; stroke-linejoin: round; paint-order: stroke; }
.marker { fill: #fff; stroke: #bdbab9; stroke-width: 5; }
.hit-red { fill: none; stroke: #ff3b3b; stroke-opacity: .6; stroke-width: 6; }
.hit-blue { fill: none; stroke: #2a20ff; stroke-opacity: .38; stroke-width: 6; }
.box-red { fill: none; stroke: #e84a4a; stroke-opacity: .7; stroke-width: 3; }
.box-blue { fill: none; stroke: #5a50ff; stroke-opacity: .5; stroke-width: 3; }
.mapbox { position: absolute; left: 20px; top: 162px; }
.mapbox text { font-family: Lato, sans-serif; font-weight: 700; font-size: 51px; fill: #fff; stroke: #8e8e8e; stroke-width: 8px; stroke-linejoin: round; paint-order: stroke; }
.info { position: absolute; left: 1076px; top: 167px; }
.locate { position: absolute; left: 987px; top: 481px; width: 132px; height: 132px; border-radius: 50%; background: #fff; }
.statusbar { position: absolute; left: 0; top: 0; width: 1170px; height: 148px; padding-left: 67px; display: flex; align-items: center; }
.clock { width: 134px; font-weight: 600; font-size: 46px; line-height: 56px; letter-spacing: 0.3px; }
.loc { margin-left: 2px; }
.dots { display: flex; gap: 5px; margin: 24px 0 0 666px; }
.dots i { width: 9px; height: 9px; border-radius: 3px; background: #000; opacity: .22; }
.wifi { margin-left: 17px; }
.battery { margin-left: 17px; }

/* search */
.sheet { flex: none; height: 1444px; padding-top: 54px; }
.search-row { display: flex; height: 188px; padding-left: 12px; }
.back { flex: none; margin: 62px 60px 0 0; }
.search-card { width: 980px; border: 3px solid #dfe0e9; border-radius: 17px; background: #fff; overflow: hidden; }
.search-field { display: flex; align-items: center; height: 156px; padding: 0 35px 3px 48px; border-bottom: 3px solid #dfe0e9; }
.query { flex: 1; margin: 2px 0 0 53px; font-weight: 700; font-size: 52px; line-height: 64px; letter-spacing: 0.3px; color: #3b474d; }
.search-tail { display: flex; height: 27px; }
.search-tail span:first-child { width: 821px; border-right: 2px solid #dfe0e9; }

/* services */
.services { position: relative; display: grid; grid-template-columns: repeat(3, 350px); grid-auto-rows: 300.5px; justify-content: center; padding-top: 72px; }
.service { display: flex; flex-direction: column; align-items: center; }
.tile { flex: none; border-radius: 25px; }
.transit { background: linear-gradient(#cee5f6 106px, #eaf0f7 106px); }
.scooter { background: linear-gradient(#d7e8c6 106px, #eff1ec 106px); }
.parking { background: linear-gradient(#c0d4ec 106px, #e9eef6 106px); }
.cars { background: #f5efef; }
.charging { background: #eeecf6; }
.covid { background: #ebf1f5; }
.line { fill: none; stroke: #f3f5fb; stroke-width: 2.6; stroke-linejoin: round; stroke-linecap: round; }
.dim { stroke: #f3f3f7; }
.live { font-weight: 700; font-size: 25px; }
.pee { font-weight: 300; }
.name { width: 340px; margin-top: 24px; text-align: center; font-size: 38px; line-height: 47px; letter-spacing: 0.2px; color: #ececf1; }
.empty { position: absolute; left: 0; top: 369px; width: 1170px; margin: 0; text-align: center; font-size: 46px; line-height: 60px; color: #3b474d; opacity: .8; }

/* keyboard */
.keyboard { position: relative; flex: none; height: 424px; padding: 24px 9px 0; background: #d5d7df; display: flex; flex-direction: column; gap: 36px; overflow: hidden; }
.keys, .letters { display: flex; gap: 18px; justify-content: center; }
.last { justify-content: space-between; gap: 0; }
.keys b { width: 99px; height: 126px; border-radius: 15px; background: #fff; box-shadow: 0 3px 0 #8b8c91; font-weight: 400; font-size: 64px; line-height: 129px; text-align: center; color: #000; }
.keys .wide { width: 132px; }
.wide svg { display: block; }
.keys .erase { background: #b3b7c1; }
.home { position: absolute; left: 377px; top: 385px; width: 417px; height: 15px; border-radius: 8px; background: linear-gradient(rgba(30, 32, 35, .85), rgba(75, 77, 80, .68)); }
```
